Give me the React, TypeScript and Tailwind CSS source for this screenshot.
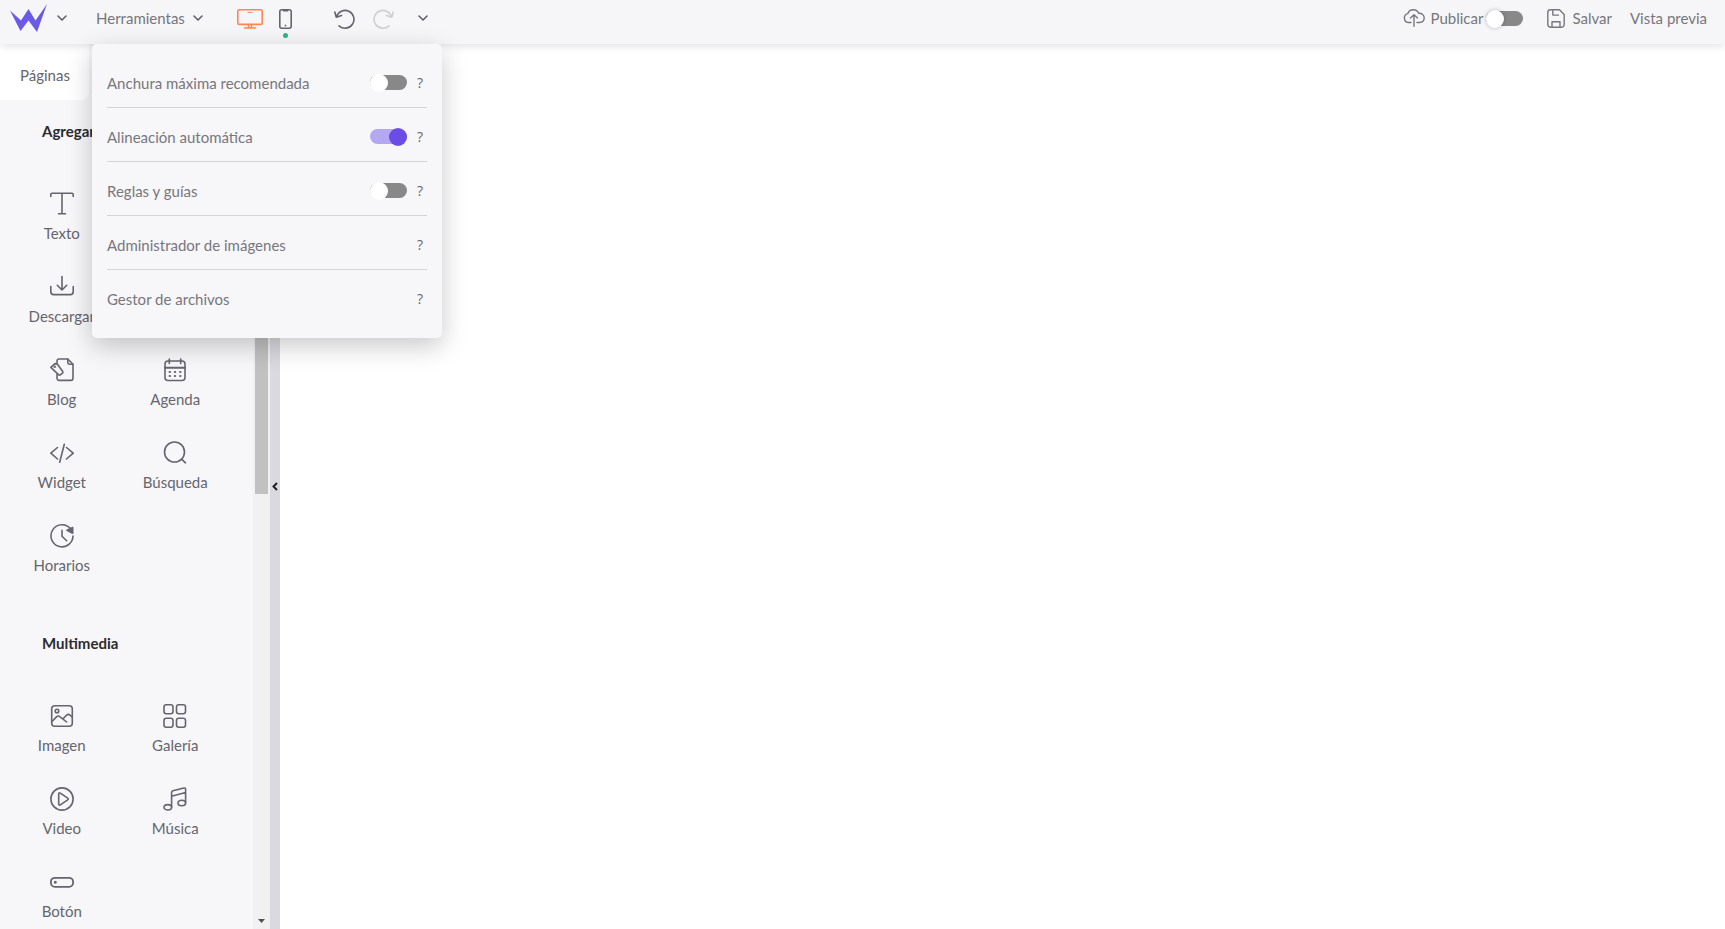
import React, { useState } from "react";

type IconProps = { children: React.ReactNode };

const Icon: React.FC<IconProps> = ({ children }) => (
  <svg
    className="w-6 h-6"
    viewBox="0 0 24 24"
    fill="none"
    stroke="currentColor"
    strokeWidth="1.6"
    strokeLinecap="round"
    strokeLinejoin="round"
    aria-hidden="true"
  >
    {children}
  </svg>
);

const Chevron: React.FC = () => (
  <svg className="w-[10px] h-[10px]" viewBox="0 0 10 10" fill="none" stroke="#5c5b61" strokeWidth="1.5" strokeLinecap="round" strokeLinejoin="round" aria-hidden="true">
    <path d="M1 3l4 4 4-4" />
  </svg>
);

type SwitchProps = { id: string; label: string; on?: boolean; raised?: boolean };

const Switch: React.FC<SwitchProps> = ({ id, label, on = false, raised = false }) => {
  const [checked, setChecked] = useState<boolean>(on);
  return (
    <input
      id={id}
      type="checkbox"
      role="switch"
      aria-label={label}
      checked={checked}
      onChange={() => setChecked(!checked)}
      className={
        "appearance-none relative shrink-0 w-[37px] h-[15px] rounded-full bg-[#888888] checked:bg-[#b5a8f2] before:content-[''] before:absolute before:-top-[1px] before:left-0 before:w-[18px] before:h-[18px] before:rounded-full before:bg-white checked:before:left-[19px] checked:before:bg-[#6b4de6] " +
        (raised ? "before:shadow-[0_0_4px_rgba(0,0,0,0.25)]" : "")
      }
    />
  );
};

type Item = { label: string; icon: React.ReactNode } | null;

const elements: Item[] = [
  {
    label: "Texto",
    icon: <path d="M.8 4.500V2.600C.8 1.700 1.300 1.300 2 1.300h20c.7 0 1.200.4 1.200 1.300v1.900M12 1.300v20.400M8.500 21.700h7" />,
  },
  null,
  {
    label: "Descargar",
    icon: <path d="M.8 11.500v5.300c0 1.800 1 2.800 2.800 2.800h16.800c1.800 0 2.800-1 2.800-2.800v-5.300M12 1.500v13.200M7.300 10.300l4.700 4.700 4.700-4.700" />,
  },
  null,
  {
    label: "Blog",
    icon: (
      <>
        <path d="M7 5V3.200C7 2 7.900 1 9.200 1H17.800L23 6.200V20c0 1.500-.9 2.400-2.300 2.400H9.300C7.900 22.400 7 21.500 7 20v-3.400" />
        <path d="M17.800 1v3.600c0 1 .6 1.600 1.600 1.600H23" />
        <path d="M.8 9.300L5 5.600l2.300.5L12.400 13c.6.8.5 1.700-.2 2.300l-1.600 1.300c-.8.600-1.700.500-2.300-.2L.8 9.300z" />
        <circle cx="4.700" cy="8.800" r=".5" />
      </>
    ),
  },
  {
    label: "Agenda",
    icon: (
      <>
        <rect x="2" y="3" width="20" height="19.500" rx="3" />
        <path d="M2 9.800h20" strokeWidth="2" />
        <path d="M6.300 1v4.500M17.700 1v4.500" />
        <path d="M6.500 14h.6M11.700 14h.6M17 14h.6M6.500 18h.6M11.700 18h.6M17 18h.6" strokeWidth="1.800" />
      </>
    ),
  },
  {
    label: "Widget",
    icon: <path d="M7.500 6.500L.8 12.200l6.700 5.800M16.500 6.500l6.700 5.700-6.700 5.800M14.300 3.300L9.700 21.200" />,
  },
  {
    label: "Búsqueda",
    icon: (
      <>
        <circle cx="11.500" cy="11" r="10" />
        <path d="M18.700 18.200l3.800 3.600" />
      </>
    ),
  },
  {
    label: "Horarios",
    icon: (
      <>
        <path d="M20.500 4.800A11 11 0 1 0 23 12" />
        <path d="M12 6.200v6l4.700 4.600" />
        <path d="M22.700 3.500v5.800l-5.700-3z" fill="currentColor" />
      </>
    ),
  },
];

const media: Item[] = [
  {
    label: "Imagen",
    icon: (
      <>
        <rect x="1.700" y="1.700" width="20.600" height="20.600" rx="3" />
        <circle cx="7" cy="7" r="1.800" />
        <path d="M2 17.500l4.500-4.600c1.200-1.200 2.400-1.200 3.600-.1l6.500 5.200M13.200 14.600l3.200-3.300c1.300-1.200 2.500-1.200 3.700-.1l2 1.700" />
      </>
    ),
  },
  {
    label: "Galería",
    icon: (
      <>
        <rect x="1" y=".8" width="9" height="9" rx="2.200" />
        <rect x="13.500" y=".8" width="9" height="9" rx="2.200" />
        <rect x="1" y="14.200" width="9" height="9" rx="2.200" />
        <rect x="13.500" y="14.200" width="9" height="9" rx="2.200" />
      </>
    ),
  },
  {
    label: "Video",
    icon: (
      <>
        <circle cx="12" cy="12" r="11.100" />
        <path d="M8.700 7v10c0 1 .8 1.400 1.600.900l7.400-5c.8-.5.800-1.200 0-1.700l-7.400-5C9.500 5.600 8.700 6 8.700 7z" />
      </>
    ),
  },
  {
    label: "Música",
    icon: (
      <>
        <ellipse cx="4.800" cy="20.300" rx="3.800" ry="2.700" />
        <ellipse cx="18.800" cy="16" rx="3.800" ry="2.700" />
        <path d="M8.600 20.300V5.500c0-1 .4-1.500 1.300-1.800l11-2.700c1.100-.2 1.700.2 1.700 1.300V16M8.600 9.200l14-3.700" />
      </>
    ),
  },
  {
    label: "Botón",
    icon: (
      <>
        <rect x=".9" y="7.800" width="22.200" height="9" rx="4" strokeWidth="1.800" />
        <circle cx="5.300" cy="12.300" r=".7" fill="currentColor" />
      </>
    ),
  },
];

type SectionProps = { title: string; items: Item[] };

const Section: React.FC<SectionProps> = ({ title, items }) => (
  <section className="pt-[21px] pb-[25px]">
    <h2 className="mb-[31px] pl-[42px] text-[15px] leading-5 font-bold text-[#2b2b30]">{title}</h2>
    <div className="grid grid-cols-2 pl-[5px] pr-[21px]">
      {items.map((item, i) =>
        item ? (
          <button key={i} type="button" className="flex flex-col items-center h-[83px] pt-5 text-[#66656d]">
            <Icon>{item.icon}</Icon>
            <span className="mt-[7px] text-[15px] leading-5">{item.label}</span>
          </button>
        ) : (
          <span key={i} />
        )
      )}
    </div>
  </section>
);

const tools = [
  { id: "max-width", label: "Anchura máxima recomendada", toggle: true, on: false },
  { id: "auto-align", label: "Alineación automática", toggle: true, on: true },
  { id: "rulers", label: "Reglas y guías", toggle: true, on: false },
  { id: "images", label: "Administrador de imágenes", toggle: false, on: false },
  { id: "files", label: "Gestor de archivos", toggle: false, on: false },
];

const ToolsMenu: React.FC = () => (
  <ul className="absolute top-11 left-[92px] z-20 w-[350px] pt-[10px] pb-[14px] px-[15px] rounded-[5px] bg-[#f7f7fa] shadow-[0_8px_26px_rgba(0,0,0,0.22)]">
    {tools.map((tool) => (
      <li key={tool.id} className="flex items-center h-[54px] pt-1 border-b border-[#d3d3d8] last:border-transparent">
        {tool.toggle ? (
          <>
            <label htmlFor={tool.id} className="flex-1 text-[#77767c]">
              {tool.label}
            </label>
            <Switch id={tool.id} label={tool.label} on={tool.on} />
          </>
        ) : (
          <button type="button" className="flex-1 text-left text-[#77767c]">
            {tool.label}
          </button>
        )}
        <button type="button" className="w-[14px] ml-[6px] text-center font-['Open_Sans',sans-serif] text-[14px] text-[#66656d]">
          ?
        </button>
      </li>
    ))}
  </ul>
);

const Header: React.FC = () => (
  <header className="relative z-10 flex items-center h-11 pb-2 pl-[10px] pr-[18px] bg-[#f6f6f9] text-[#77767c] shadow-[0_2px_8px_rgba(0,0,0,0.12)]">
    <button type="button" aria-label="Menú" className="flex items-center gap-[10px]">
      <svg className="w-[37px] h-7" viewBox="0 0 37 28" fill="#6a5ae4" aria-hidden="true">
        <path d="M0 6.500L11 16.500 18.500 5l7 11.500L37 0 27 28 18.500 16.500 10.500 27z" />
      </svg>
      <Chevron />
    </button>
    <button type="button" className="flex items-center gap-2 ml-[29px]">
      Herramientas
      <Chevron />
    </button>
    <div className="flex items-center pt-[2px] ml-[34px]">
      <button type="button" aria-label="Escritorio" className="text-[#ff8552]">
        <svg className="w-[26px] h-5" viewBox="0 0 26 20" fill="none" stroke="currentColor" strokeWidth="1.600" strokeLinecap="round" aria-hidden="true">
          <rect x=".8" y=".8" width="24.400" height="14.600" rx="1.500" />
          <path d="M11 3.400h4" strokeWidth="1" />
          <path d="M11.500 15.500v3.300M14.500 15.500v3.300M7.500 19h11" />
        </svg>
      </button>
      <button type="button" aria-label="Móvil" className="relative ml-4 text-[#66656d]">
        <svg className="w-[13px] h-5" viewBox="0 0 13 20" fill="none" stroke="currentColor" strokeWidth="1.600" aria-hidden="true">
          <rect x=".8" y=".8" width="11.400" height="18.400" rx="2" />
          <path d="M3.800 1.600h5.400" strokeWidth="1.800" />
          <circle cx="6.500" cy="16.500" r=".5" fill="currentColor" strokeWidth="1" />
        </svg>
        <span className="absolute top-6 left-1 w-[5px] h-[5px] rounded-full bg-[#2fb488]" />
      </button>
      <button type="button" aria-label="Deshacer" className="ml-[42px] text-[#66656d]">
        <svg className="w-[21px] h-5" viewBox="0 0 21 20" fill="none" stroke="currentColor" strokeWidth="1.600" strokeLinecap="round" strokeLinejoin="round" aria-hidden="true">
          <path d="M2.500 7.800A8.900 8.900 0 1 1 5 16.800M.8 3l1.500 5.200 5.200-1.700" />
        </svg>
      </button>
      <button type="button" aria-label="Rehacer" className="ml-[18px] text-[#cfced2]">
        <svg className="w-[21px] h-5" viewBox="0 0 21 20" fill="none" stroke="currentColor" strokeWidth="1.600" strokeLinecap="round" strokeLinejoin="round" aria-hidden="true">
          <path d="M18.500 7.800A8.900 8.900 0 1 0 16 16.800M20.200 3l-1.500 5.200-5.200-1.700" />
        </svg>
      </button>
    </div>
    <button type="button" aria-label="Más" className="ml-6">
      <Chevron />
    </button>
    <div className="flex items-center ml-auto">
      <svg className="w-[22px] h-[18px]" viewBox="0 0 22 18" fill="none" stroke="currentColor" strokeWidth="1.400" strokeLinecap="round" strokeLinejoin="round" aria-hidden="true">
        <path d="M8 13.500H5.300A4.500 4.500 0 0 1 4.700 4.700C5.700 2.200 7.800.8 10.300.8c2.600 0 4.500 1.300 5.400 3.500 3.200-.2 5.500 1.700 5.500 4.500 0 2.700-1.900 4.700-4.700 4.700H14M11 17.200V6M7.500 9L11 5.700 14.500 9" />
      </svg>
      <label htmlFor="publish" className="ml-[6px] mr-[3px]">
        Publicar
      </label>
      <Switch id="publish" label="Publicar" raised />
      <button type="button" className="flex items-center gap-[7px] ml-6">
        <svg className="w-[18px] h-[19px]" viewBox="0 0 18 19" fill="none" stroke="currentColor" strokeWidth="1.400" strokeLinejoin="round" aria-hidden="true">
          <path d="M3.500.8h9L17.200 5.500v9.800a3 3 0 0 1-3 3H3.800a3 3 0 0 1-3-3V3.500A2.700 2.700 0 0 1 3.500.8z" />
          <path d="M5.800.8v5.300H12M5 18v-5.200h8V18" />
        </svg>
        Salvar
      </button>
      <a href="#vista-previa" className="ml-[18px]">
        Vista previa
      </a>
    </div>
  </header>
);

const App: React.FC = () => {
  return (
    <div className="relative flex flex-col h-screen overflow-hidden bg-white font-['Lato',sans-serif] text-[15px] leading-5">
      <Header />
      <ToolsMenu />
      <div className="flex flex-1 min-h-0">
        <aside className="flex flex-col w-[270px] bg-[#f7f7fa]">
          <nav className="flex">
            <a href="#paginas" className="pt-[21px] pb-[15px] pl-5 pr-[19px] rounded-br-lg bg-white text-[#66656d]">
              Páginas
            </a>
          </nav>
          <div className="flex flex-1 min-h-0">
            <div className="flex-1 overflow-hidden">
              <Section title="Agregar" items={elements} />
              <Section title="Multimedia" items={media} />
            </div>
            <div className="flex flex-col items-center w-[17px] pt-[17px] pb-1 bg-[#f1f1f1]">
              <div className="w-[13px] h-[377px] bg-[#c1c1c1]" />
              <svg className="w-[7px] h-[7px] mt-auto" viewBox="0 0 7 7" fill="#505050" aria-hidden="true">
                <path d="M0 1h7L3.500 5z" />
              </svg>
            </div>
          </div>
        </aside>
        <button type="button" aria-label="Contraer panel" className="flex items-center justify-center w-[10px] bg-[#dad9df]">
          <svg className="w-[6px] h-[9px]" viewBox="0 0 6 9" fill="none" stroke="#222" strokeWidth="2" aria-hidden="true">
            <path d="M5 1L1.500 4.500 5 8" />
          </svg>
        </button>
        <main className="flex-1 bg-white" />
      </div>
    </div>
  );
};

export default App;
